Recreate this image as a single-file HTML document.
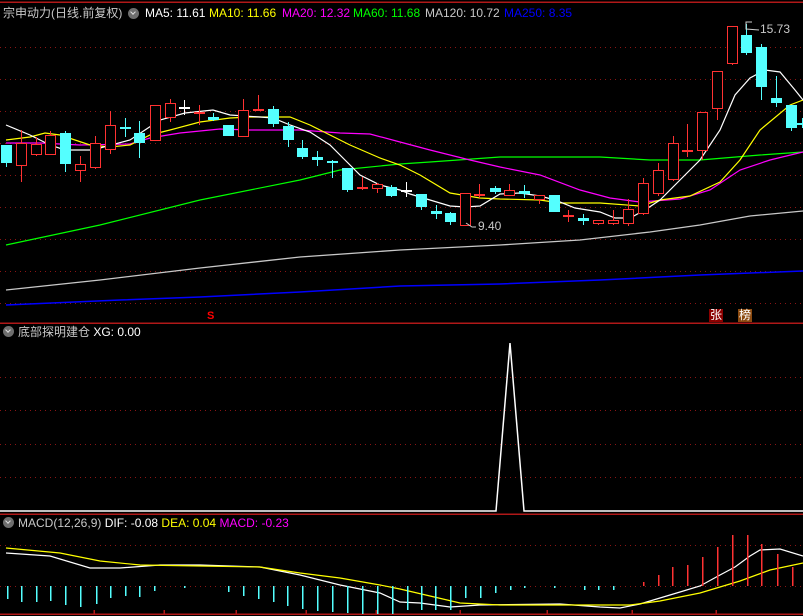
<!DOCTYPE html>
<html><head><meta charset="utf-8"><style>
body{margin:0;background:#000;width:803px;height:616px;overflow:hidden;font-family:"Liberation Sans","Noto Sans CJK SC",sans-serif}
svg{position:absolute;left:0;top:0}
.t{position:absolute;font-size:12px;white-space:nowrap;line-height:14px}
.ic{position:absolute;width:11px;height:11px;border-radius:50%;background:#6e6e6e}
.ic:after{content:"";position:absolute;left:3px;top:2px;width:3px;height:3px;border-right:1.5px solid #ddd;border-bottom:1.5px solid #ddd;transform:rotate(45deg)}
</style></head><body>
<svg id="s" width="803" height="616" viewBox="0 0 803 616" shape-rendering="crispEdges">
<g stroke="#8a1414" stroke-dasharray="1,4" stroke-width="1">
<line x1="0" y1="47.5" x2="803" y2="47.5"/><line x1="0" y1="79.5" x2="803" y2="79.5"/><line x1="0" y1="111.5" x2="803" y2="111.5"/><line x1="0" y1="143.5" x2="803" y2="143.5"/><line x1="0" y1="175.5" x2="803" y2="175.5"/><line x1="0" y1="207.5" x2="803" y2="207.5"/><line x1="0" y1="239.5" x2="803" y2="239.5"/><line x1="0" y1="271.5" x2="803" y2="271.5"/><line x1="0" y1="303.5" x2="803" y2="303.5"/>
<line x1="0" y1="377.5" x2="803" y2="377.5"/><line x1="0" y1="410.5" x2="803" y2="410.5"/><line x1="0" y1="444.5" x2="803" y2="444.5"/><line x1="0" y1="477.5" x2="803" y2="477.5"/>
<line x1="0" y1="545.5" x2="803" y2="545.5"/><line x1="0" y1="586.5" x2="803" y2="586.5"/>
</g>
<g stroke="#b01818" stroke-width="1.5">
<line x1="0" y1="2" x2="803" y2="2"/><line x1="0" y1="323" x2="803" y2="323"/><line x1="0" y1="514" x2="803" y2="514"/><line x1="0" y1="614" x2="803" y2="614"/>
<line x1="94" y1="610" x2="94" y2="614"/><line x1="164" y1="610" x2="164" y2="614"/><line x1="236" y1="610" x2="236" y2="614"/><line x1="306" y1="610" x2="306" y2="614"/><line x1="376" y1="610" x2="376" y2="614"/><line x1="460" y1="610" x2="460" y2="614"/><line x1="547" y1="610" x2="547" y2="614"/><line x1="632" y1="610" x2="632" y2="614"/><line x1="716" y1="610" x2="716" y2="614"/>
</g>
<g fill="none" stroke-width="1.2" shape-rendering="auto">
<polyline stroke="#0000ff" stroke-width="1.5" points="6,305 120,300 200,297 300,292 400,286 500,284 600,280 700,275 803,271"/>
<polyline stroke="#c8c8c8" stroke-width="1.3" points="6,290 100,280 200,268 300,257 400,250 500,245 580,240 650,232 700,225 750,216 803,211"/>
<polyline stroke="#00ff00" points="6,245 100,225 200,200 300,180 340,170 400,164 430,162 500,157 600,157 650,160 700,160 760,155 803,152"/>
<polyline stroke="#ff00ff" points="6,143 40,143 80,145 130,144 150,138 180,133 220,129 250,130 300,130 340,133 370,134 400,142 430,150 470,160 500,167 540,175 580,190 610,198 640,202 680,199 710,190 740,170 770,160 803,152"/>
<polyline stroke="#ffff00" points="6,140 30,137 45,133 60,135 90,145 110,147 130,145 150,135 170,130 200,122 230,118 250,117 290,117 310,125 330,135 350,145 380,158 400,165 420,175 450,193 480,198 500,199 540,200 560,203 600,203 640,206 660,200 690,196 720,182 740,160 760,130 790,105 803,100"/>
<polyline stroke="#ffffff" points="6,125 30,135 50,145 65,150 90,150 100,148 130,140 145,130 160,120 185,113 213,110 230,115 260,117 273,118 290,125 310,132 330,145 345,160 360,175 380,185 400,190 410,194 430,200 450,206 465,207 480,206 500,194 520,193 540,196 555,200 575,208 600,212 615,218 630,218 645,210 660,200 680,180 700,160 720,130 735,95 750,78 765,70 780,72 795,90 803,100"/>
<polyline stroke="#ffffff" stroke-width="1.5" points="0,511 496,511 510,343 524,511 803,511"/>
<polyline stroke="#ffffff" points="6,553 50,556 90,568 120,568 160,565 200,565 260,567 300,575 340,585 380,593 400,602 420,603 450,607 480,605 560,604 600,607 620,608 640,604 660,598 680,592 700,586 720,575 735,567 750,556 760,550 780,549 803,556"/>
<polyline stroke="#ffff00" points="6,548 60,553 100,561 140,565 200,566 260,567 300,573 340,578 380,585 400,589 430,596 460,603 500,605 630,605 660,601 700,593 740,581 770,570 803,563"/>
</g>
<g id="c"></g>
<g id="h"></g>
<polyline points="752,22 746,22 746,29 759,30" fill="none" stroke="#ccc" shape-rendering="auto"/>
<polyline points="466,223 472,227 476,227" fill="none" stroke="#ccc" shape-rendering="auto"/>
<rect x="709" y="309" width="14" height="13" fill="#8b0000"/>
<rect x="738" y="309" width="14" height="13" fill="#8b4a10"/>
</svg>
<div class="t" style="left:3px;top:6px;color:#c8c8c8">宗申动力(日线.前复权)</div>
<div class="ic" style="left:128px;top:8px"></div>
<div class="t" style="left:145px;top:6px;color:#fff">MA5: 11.61</div>
<div class="t" style="left:209px;top:6px;color:#ff0">MA10: 11.66</div>
<div class="t" style="left:282px;top:6px;color:#f0f">MA20: 12.32</div>
<div class="t" style="left:353px;top:6px;color:#0f0">MA60: 11.68</div>
<div class="t" style="left:425px;top:6px;color:#c8c8c8">MA120: 10.72</div>
<div class="t" style="left:504px;top:6px;color:#00f">MA250: 8.35</div>
<div class="t" style="left:760px;top:22px;color:#c8c8c8">15.73</div>
<div class="t" style="left:478px;top:219px;color:#c8c8c8">9.40</div>
<div class="t" style="left:207px;top:309px;color:#f00;font-weight:bold;font-size:11px">S</div>
<div class="t" style="left:710px;top:308px;color:#fff;font-size:12px">张</div>
<div class="t" style="left:739px;top:308px;color:#fff;font-size:12px">榜</div>
<div class="ic" style="left:3px;top:326px"></div>
<div class="t" style="left:18px;top:325px;color:#c8c8c8">底部探明建仓 <span style="color:#fff">XG: 0.00</span></div>
<div class="ic" style="left:3px;top:517px"></div>
<div class="t" style="left:18px;top:516px;color:#c8c8c8">MACD(12,26,9) <span style="color:#fff">DIF: -0.08</span> <span style="color:#ff0">DEA: 0.04</span> <span style="color:#f0f">MACD: -0.23</span></div>
<script>
var C=[[6,145,163,145,167,0],[21,143,165,130,182,1],[36,144,154,137,156,1],[50,135,154,131,155,1],[65,133,164,131,172,0],[80,164,170,156,182,1],[95,143,167,136,169,1],[110,125,149,111,154,1],[125,127,128,118,137,0],[139,133,143,121,158,0],[155,105,140,105,140,1],[170,103,117,99,122,1],[184,107,108,100,115,2],[199,112,114,105,125,1],[213,117,120,113,121,0],[228,125,136,125,136,0],[243,110,136,99,137,1],[258,109,110,95,110,1],[273,109,124,106,127,0],[288,126,140,122,147,0],[302,148,157,140,159,0],[317,157,160,151,166,0],[332,161,163,160,178,0],[347,168,190,168,192,0],[362,187,189,177,190,1],[377,184,188,183,193,1],[391,187,196,185,197,0],[406,190,191,182,197,2],[421,194,207,194,210,0],[436,211,214,205,219,0],[450,213,222,212,225,0],[465,193,225,193,225,1],[479,194,195,184,198,1],[495,188,192,186,194,0],[509,190,195,184,196,1],[524,191,194,185,198,0],[539,195,199,195,204,1],[554,195,212,195,212,0],[568,215,216,210,222,1],[583,218,221,214,225,0],[598,220,223,220,225,1],[613,220,223,210,225,1],[628,209,223,199,226,1],[643,183,213,178,215,1],[658,170,193,163,196,1],[673,143,179,136,181,1],[687,150,152,124,157,1],[702,112,150,112,160,1],[717,71,108,71,120,1],[732,26,63,26,65,1],[746,35,53,24,55,0],[761,47,87,44,100,0],[776,98,103,76,107,0],[791,105,128,105,131,0],[802,123,125,118,128,0]];
var g=document.getElementById('c'),s='';
C.forEach(function(c){var x=c[0],col=c[5]==1?'#ff3232':(c[5]==2?'#fff':'#54ffff');
s+='<line x1="'+(x+.5)+'" y1="'+c[3]+'" x2="'+(x+.5)+'" y2="'+c[4]+'" stroke="'+col+'"/>';
if(c[2]-c[1]<3){s+='<rect x="'+(x-5)+'" y="'+c[1]+'" width="11" height="2" fill="'+col+'"/>';}
else if(c[5]==1){s+='<rect x="'+(x-4.5)+'" y="'+(c[1]+.5)+'" width="10" height="'+(c[2]-c[1])+'" fill="#000" stroke="'+col+'"/>';}
else{s+='<rect x="'+(x-5)+'" y="'+c[1]+'" width="11" height="'+(c[2]-c[1])+'" fill="'+col+'"/>';}});
g.innerHTML=s;
var H=[[7,599],[21,602],[36,602],[50,601],[65,605],[80,607],[96,604],[110,598],[125,596],[139,597],[154,591],[184,588],[228,592],[243,596],[258,599],[273,602],[287,606],[302,609],[317,611],[332,612],[347,613],[362,614],[377,614],[392,614],[407,610],[421,610],[435,610],[450,610],[465,598],[480,598],[495,593],[510,590],[524,588],[554,588],[584,590],[598,590],[613,590],[643,582],[658,575],[672,567],[687,565],[702,557],[717,547],[732,535],[747,535],[761,544],[777,554],[792,567]];
s='';H.forEach(function(h){var col=h[1]>586?'#54ffff':'#ff3232';s+='<line x1="'+(h[0]+.5)+'" y1="586" x2="'+(h[0]+.5)+'" y2="'+h[1]+'" stroke="'+col+'" stroke-width="1.5"/>';});
document.getElementById('h').innerHTML=s;
</script>
</body></html>
